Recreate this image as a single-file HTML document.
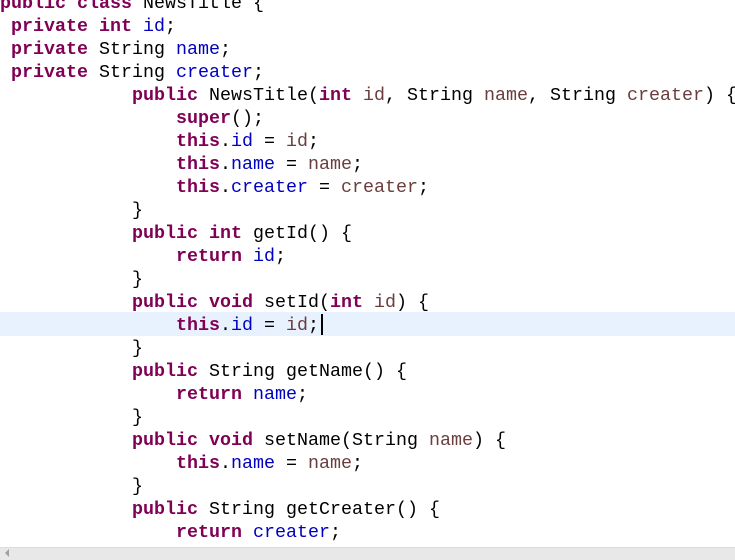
<!DOCTYPE html>
<html><head><meta charset="utf-8"><style>
html,body{margin:0;padding:0;width:735px;height:559px;overflow:hidden;background:#fff;}
#c{position:absolute;left:0;top:-8px;font-family:"Liberation Mono","DejaVu Sans Mono",monospace;font-size:18.33px;line-height:23px;white-space:pre;color:#000;}
.k{color:#7f0055;font-weight:bold;}
.f{color:#0000c0;}
.p{color:#6a3e3e;}
.hl{position:absolute;left:0;top:312px;width:735px;height:24px;background:#e8f2fe;}
.cur{position:absolute;left:321px;top:314px;width:2px;height:21px;background:#000;}
.sb{position:absolute;left:0;top:547px;width:735px;height:12px;background:#e8e8e8;border-top:1px solid #dcdcdc;}
.ar{position:absolute;left:5px;top:549px;width:0;height:0;border-top:4px solid transparent;border-bottom:4px solid transparent;border-right:4px solid #a0a0a0;}
</style></head><body>
<div class="hl"></div>
<div id="c"><span class="k">public</span> <span class="k">class</span> NewsTitle {
 <span class="k">private</span> <span class="k">int</span> <span class="f">id</span>;
 <span class="k">private</span> String <span class="f">name</span>;
 <span class="k">private</span> String <span class="f">creater</span>;
            <span class="k">public</span> NewsTitle(<span class="k">int</span> <span class="p">id</span>, String <span class="p">name</span>, String <span class="p">creater</span>) {
                <span class="k">super</span>();
                <span class="k">this</span>.<span class="f">id</span> = <span class="p">id</span>;
                <span class="k">this</span>.<span class="f">name</span> = <span class="p">name</span>;
                <span class="k">this</span>.<span class="f">creater</span> = <span class="p">creater</span>;
            }
            <span class="k">public</span> <span class="k">int</span> getId() {
                <span class="k">return</span> <span class="f">id</span>;
            }
            <span class="k">public</span> <span class="k">void</span> setId(<span class="k">int</span> <span class="p">id</span>) {
                <span class="k">this</span>.<span class="f">id</span> = <span class="p">id</span>;
            }
            <span class="k">public</span> String getName() {
                <span class="k">return</span> <span class="f">name</span>;
            }
            <span class="k">public</span> <span class="k">void</span> setName(String <span class="p">name</span>) {
                <span class="k">this</span>.<span class="f">name</span> = <span class="p">name</span>;
            }
            <span class="k">public</span> String getCreater() {
                <span class="k">return</span> <span class="f">creater</span>;
</div>
<div class="cur"></div>
<div class="sb"></div><div class="ar"></div>
</body></html>
